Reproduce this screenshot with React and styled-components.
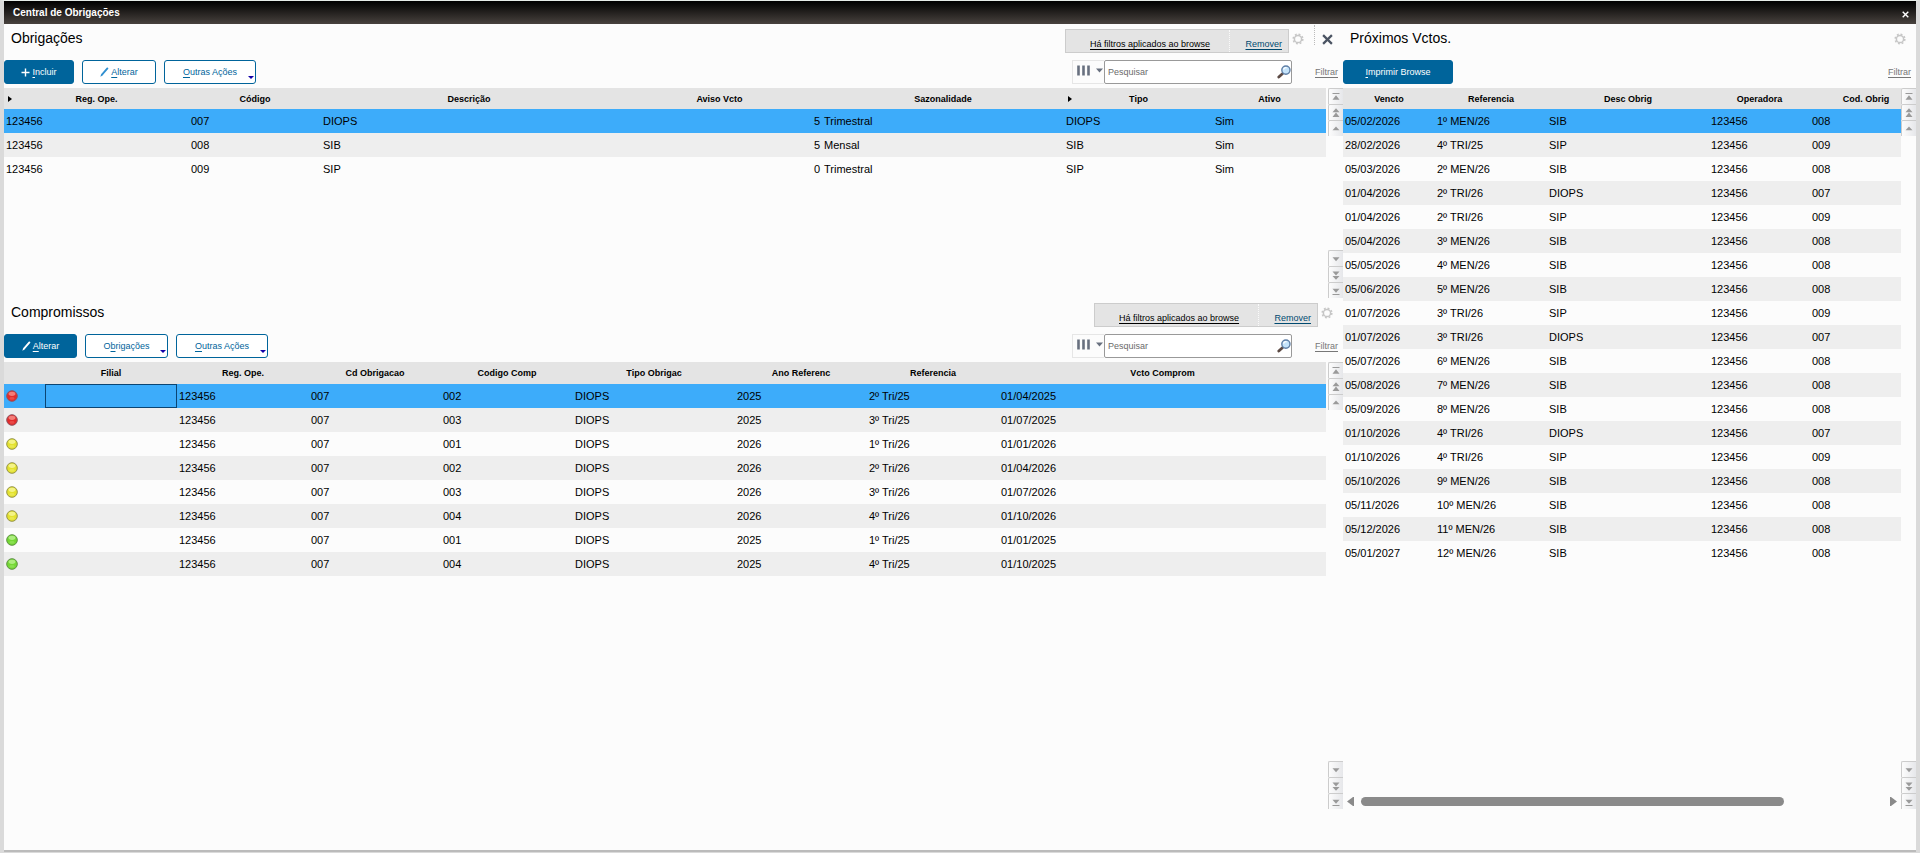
import React, { useState } from "react";
import styled, { createGlobalStyle, css } from "styled-components";

const obrigacoesCols = [
  { label: "Reg. Ope.", width: 185, marker: true },
  { label: "Código", width: 132 },
  { label: "Descrição", width: 296 },
  { label: "Aviso Vcto", width: 205, align: "right" },
  { label: "Sazonalidade", width: 242 },
  { label: "Tipo", width: 149, marker: true },
  { label: "Ativo", width: 113 },
];

const obrigacoes = [
  ["123456", "007", "DIOPS", "5", "Trimestral", "DIOPS", "Sim"],
  ["123456", "008", "SIB", "5", "Mensal", "SIB", "Sim"],
  ["123456", "009", "SIP", "0", "Trimestral", "SIP", "Sim"],
];

const compromissosCols = [
  { label: "", width: 41 },
  { label: "Filial", width: 132 },
  { label: "Reg. Ope.", width: 132 },
  { label: "Cd Obrigacao", width: 132 },
  { label: "Codigo Comp", width: 132 },
  { label: "Tipo Obrigac", width: 162 },
  { label: "Ano Referenc", width: 132 },
  { label: "Referencia", width: 132 },
  { label: "Vcto Comprom", width: 327 },
];

const compromissos = [
  ["red", "", "123456", "007", "002", "DIOPS", "2025", "2º Tri/25", "01/04/2025"],
  ["red", "", "123456", "007", "003", "DIOPS", "2025", "3º Tri/25", "01/07/2025"],
  ["yellow", "", "123456", "007", "001", "DIOPS", "2026", "1º Tri/26", "01/01/2026"],
  ["yellow", "", "123456", "007", "002", "DIOPS", "2026", "2º Tri/26", "01/04/2026"],
  ["yellow", "", "123456", "007", "003", "DIOPS", "2026", "3º Tri/26", "01/07/2026"],
  ["yellow", "", "123456", "007", "004", "DIOPS", "2026", "4º Tri/26", "01/10/2026"],
  ["green", "", "123456", "007", "001", "DIOPS", "2025", "1º Tri/25", "01/01/2025"],
  ["green", "", "123456", "007", "004", "DIOPS", "2025", "4º Tri/25", "01/10/2025"],
];

const vctosCols = [
  { label: "Vencto", width: 92 },
  { label: "Referencia", width: 112 },
  { label: "Desc Obrig", width: 162 },
  { label: "Operadora", width: 101 },
  { label: "Cod. Obrig", width: 112 },
];

const vctos = [
  ["05/02/2026", "1º MEN/26", "SIB", "123456", "008"],
  ["28/02/2026", "4º TRI/25", "SIP", "123456", "009"],
  ["05/03/2026", "2º MEN/26", "SIB", "123456", "008"],
  ["01/04/2026", "2º TRI/26", "DIOPS", "123456", "007"],
  ["01/04/2026", "2º TRI/26", "SIP", "123456", "009"],
  ["05/04/2026", "3º MEN/26", "SIB", "123456", "008"],
  ["05/05/2026", "4º MEN/26", "SIB", "123456", "008"],
  ["05/06/2026", "5º MEN/26", "SIB", "123456", "008"],
  ["01/07/2026", "3º TRI/26", "SIP", "123456", "009"],
  ["01/07/2026", "3º TRI/26", "DIOPS", "123456", "007"],
  ["05/07/2026", "6º MEN/26", "SIB", "123456", "008"],
  ["05/08/2026", "7º MEN/26", "SIB", "123456", "008"],
  ["05/09/2026", "8º MEN/26", "SIB", "123456", "008"],
  ["01/10/2026", "4º TRI/26", "DIOPS", "123456", "007"],
  ["01/10/2026", "4º TRI/26", "SIP", "123456", "009"],
  ["05/10/2026", "9º MEN/26", "SIB", "123456", "008"],
  ["05/11/2026", "10º MEN/26", "SIB", "123456", "008"],
  ["05/12/2026", "11º MEN/26", "SIB", "123456", "008"],
  ["05/01/2027", "12º MEN/26", "SIB", "123456", "008"],
];

/* Icons */
const PlusIcon = () => (
  <svg width="9" height="9" viewBox="0 0 9 9" aria-hidden="true">
    <path d="M4.5 0.5v8M0.5 4.5h8" stroke="#fff" strokeWidth="1.4" />
  </svg>
);

const PencilIcon = ({ color }) => (
  <svg width="9" height="10" viewBox="0 0 9 10" aria-hidden="true">
    <path d="M2 7.6 7.4 1.4" stroke={color} strokeWidth="1.9" strokeLinecap="round" />
    <path d="M0.4 9.8 1 7.4 2.6 8.6z" fill={color} />
  </svg>
);

const GearIcon = () => (
  <svg width="12" height="12" viewBox="0 0 12 12" aria-hidden="true">
    <circle cx="6" cy="6" r="4.8" fill="none" stroke="#c6c6c6" strokeWidth="1.6" strokeDasharray="1.9 1.87" />
    <circle cx="6" cy="6" r="3.6" fill="none" stroke="#c6c6c6" strokeWidth="1.5" />
  </svg>
);

const CrossIcon = ({ size, color }) => (
  <svg width={size} height={size} viewBox="0 0 10 10" aria-hidden="true">
    <path d="M1 1 9 9M9 1 1 9" stroke={color} strokeWidth="2" />
  </svg>
);

const ColumnsIcon = () => (
  <svg width="26" height="12" viewBox="0 0 26 12" aria-hidden="true">
    <path d="M1.5 0.5v10M6.5 0.5v10M11.5 0.5v10" stroke="#68707f" strokeWidth="2.6" />
    <path d="M19 3.5h7l-3.5 4z" fill="#68707f" />
  </svg>
);

const SearchIcon = () => (
  <svg width="14" height="14" viewBox="0 0 14 14" aria-hidden="true">
    <path d="M1.8 12 5.4 8.8" stroke="#5c4a44" strokeWidth="2.8" strokeLinecap="round" />
    <circle cx="8.9" cy="5.1" r="4.1" fill="#c5e4fb" stroke="#5f7fa6" strokeWidth="1.4" />
    <path d="M6.6 4.6a2.4 2.4 0 0 1 3-1.8" fill="none" stroke="#fff" strokeWidth="1.2" />
  </svg>
);

const scrollPaths = {
  first: "M4 2.5h8v1H4zM8 5l4 5H4z",
  pageUp: "M8 1.5 12 6H4zM8 6.5l4 5H4z",
  up: "M8 4l4 4.5H4z",
  down: "M8 9.5 4 5h8z",
  pageDown: "M8 7.5 4 3h8zM8 12.5 4 8h8z",
  last: "M8 9 4 4.5h8zM4 10.5h8v1H4z",
};

const lightColors = {
  red: ["#f7928c", "#e32b2b", "#8f5560"],
  yellow: ["#f8f89c", "#e4e22e", "#96944a"],
  green: ["#bcf292", "#74d834", "#5f9146"],
};

const StatusLight = ({ color }) => {
  const [light, base, edge] = lightColors[color];
  return (
    <svg width="12" height="12" viewBox="0 0 12 12" role="img" aria-label={color}>
      <circle cx="6" cy="6" r="5.3" fill={base} stroke={edge} strokeWidth="1" />
      <ellipse cx="6" cy="3.8" rx="3.4" ry="2.1" fill={light} opacity="0.8" />
      <ellipse cx="6" cy="8.4" rx="2.6" ry="1.4" fill={light} opacity="0.3" />
    </svg>
  );
};

const ScrollStack = ({ items }) => (
  <Stack>
    {items.map((name) => (
      <ScrollButton key={name} type="button" aria-label={name}>
        <svg width="14" height="14" viewBox="0 0 16 14" aria-hidden="true">
          <path d={scrollPaths[name]} fill="#9a9a9a" />
        </svg>
      </ScrollButton>
    ))}
  </Stack>
);

const Scroller = () => (
  <ScrollColumn>
    <ScrollStack items={["first", "pageUp", "up"]} />
    <ScrollStack items={["down", "pageDown", "last"]} />
  </ScrollColumn>
);

const FilterNotice = () => (
  <Notice>
    <NoticeText href="#filtros">Há filtros aplicados ao browse</NoticeText>
    <NoticeRemove href="#remover">Remover</NoticeRemove>
  </Notice>
);

const SearchBar = ({ id }) => {
  const [value, setValue] = useState("");

  return (
    <>
      <ColumnsButton type="button" aria-label="Colunas">
        <ColumnsIcon />
      </ColumnsButton>
      <SearchBox htmlFor={id}>
        <SearchInput
          id={id}
          type="text"
          placeholder="Pesquisar"
          aria-label="Pesquisar"
          value={value}
          onChange={(e) => setValue(e.target.value)}
        />
        <SearchIcon />
      </SearchBox>
    </>
  );
};

const Browse = ({ cols, rows, minWidth, headHeight, lights }) => {
  const [selected, setSelected] = useState(0);

  return (
    <TableArea>
      <Table $minWidth={minWidth}>
        <colgroup>
          {cols.map((col, i) => (
            <col key={i} width={col.width} />
          ))}
        </colgroup>
        <thead>
          <tr>
            {cols.map((col, i) => (
              <HeadCell key={i} $height={headHeight}>
                {col.marker && <Marker />}
                {col.label}
              </HeadCell>
            ))}
          </tr>
        </thead>
        <tbody>
          {rows.map((row, r) => (
            <Row key={r} $selected={r === selected} onClick={() => setSelected(r)}>
              {row.map((value, c) => (
                <Cell key={c} $align={cols[c].align} $focused={lights && r === selected && c === 1}>
                  {lights && c === 0 ? <StatusLight color={value} /> : value}
                </Cell>
              ))}
            </Row>
          ))}
        </tbody>
      </Table>
    </TableArea>
  );
};

const App = () => {
  return (
    <Window>
      <GlobalStyle />
      <TitleBar>
        <WindowTitle>Central de Obrigações</WindowTitle>
        <TitleClose type="button" aria-label="Fechar janela">
          <CrossIcon size={7} color="#fff" />
        </TitleClose>
      </TitleBar>

      <Main>
        <LeftColumn>
          {/* Obrigações */}
          <Panel>
            <PanelHead>
              <PanelTitle>Obrigações</PanelTitle>
              <FilterNotice />
              <IconButton type="button" aria-label="Configurar"><GearIcon /></IconButton>
              <DottedLine />
              <IconButton type="button" aria-label="Fechar"><CrossIcon size={11} color="#4b5463" /></IconButton>
            </PanelHead>
            <Toolbar>
              <Button type="button" $primary $width={70}><PlusIcon /><span><u>I</u>ncluir</span></Button>
              <Button type="button" $width={74}><PencilIcon color="#2f8fd0" /><span><u>A</u>lterar</span></Button>
              <Button type="button" $width={92} $menu><span><u>O</u>utras Ações</span></Button>
              <Spacer />
              <SearchBar id="busca-obrigacoes" />
              <FilterLink href="#filtrar">Filtrar</FilterLink>
            </Toolbar>
            <PanelBody $gap={2}>
              <Browse cols={obrigacoesCols} rows={obrigacoes} headHeight={21} />
              <Scroller />
            </PanelBody>
          </Panel>

          {/* Compromissos */}
          <Panel>
            <PanelHead>
              <PanelTitle>Compromissos</PanelTitle>
              <FilterNotice />
              <IconButton type="button" aria-label="Configurar"><GearIcon /></IconButton>
            </PanelHead>
            <Toolbar>
              <Button type="button" $primary $width={73}><PencilIcon color="#fff" /><span><u>A</u>lterar</span></Button>
              <Button type="button" $width={83} $menu><span>O<u>b</u>rigações</span></Button>
              <Button type="button" $width={92} $menu><span><u>O</u>utras Ações</span></Button>
              <Spacer />
              <SearchBar id="busca-compromissos" />
              <FilterLink href="#filtrar">Filtrar</FilterLink>
            </Toolbar>
            <PanelBody $gap={2}>
              <Browse cols={compromissosCols} rows={compromissos} headHeight={22} lights />
              <Scroller />
            </PanelBody>
          </Panel>
        </LeftColumn>

        {/* Próximos vencimentos */}
        <Panel>
          <PanelHead>
            <PanelTitle>Próximos Vctos.</PanelTitle>
            <IconButton type="button" aria-label="Configurar"><GearIcon /></IconButton>
          </PanelHead>
          <Toolbar>
            <Button type="button" $primary $width={110}><span><u>I</u>mprimir Browse</span></Button>
            <Spacer />
            <FilterLink href="#filtrar">Filtrar</FilterLink>
          </Toolbar>
          <PanelBody $gap={0}>
            <WideBrowse>
              <Browse cols={vctosCols} rows={vctos} minWidth={579} headHeight={21} />
              <HorizontalScroll>
                <ScrollArrow type="button" aria-label="Rolar para a esquerda">
                  <svg width="8" height="9" viewBox="0 0 8 9"><path d="M0 4.5 6 0h1v9H6z" fill="#8a8a8a" /></svg>
                </ScrollArrow>
                <Track><Thumb /></Track>
                <ScrollArrow type="button" aria-label="Rolar para a direita">
                  <svg width="8" height="9" viewBox="0 0 8 9"><path d="M8 4.5 2 0H1v9h1z" fill="#8a8a8a" /></svg>
                </ScrollArrow>
              </HorizontalScroll>
            </WideBrowse>
            <Scroller />
          </PanelBody>
        </Panel>
      </Main>
    </Window>
  );
};

/* Styled Components */
const GlobalStyle = createGlobalStyle`
  * {
    box-sizing: border-box;
  }

  body {
    margin: 0;
    background: #dadada;
    font-family: "Liberation Sans", Arial, sans-serif;
    font-size: 9px;
    color: #000;
  }

  button, input {
    font: inherit;
    margin: 0;
  }

  button {
    cursor: pointer;
  }

  svg {
    display: block;
    flex: none;
  }
`;

const Window = styled.div`
  display: flex;
  flex-direction: column;
  min-height: 100vh;
  border: solid #dadada;
  border-width: 1px 4px;
  border-top-color: #e6ece8;
  background: #fcfcfc;
`;

const TitleBar = styled.header`
  display: flex;
  align-items: center;
  justify-content: space-between;
  height: 23px;
  padding: 0 7px 0 9px;
  background: linear-gradient(#000, #48423e);
`;

const WindowTitle = styled.h1`
  margin: 0;
  font-size: 10px;
  font-weight: bold;
  color: #fff;
`;

const TitleClose = styled.button`
  padding: 4px 0 0;
  border: none;
  background: none;
`;

const Main = styled.main`
  flex: 1;
  display: grid;
  grid-template-columns: 1fr 573px;
  padding-bottom: 41px;
  border-bottom: 2px solid #bbb;
`;

const LeftColumn = styled.div`
  display: grid;
  grid-template-rows: 274fr 511fr;
  min-width: 0;
`;

const Panel = styled.section`
  display: flex;
  flex-direction: column;
  min-width: 0;
`;

const PanelHead = styled.div`
  display: flex;
  align-items: flex-start;
  height: 36px;
  padding: 5px 7px 0;
`;

const PanelTitle = styled.h2`
  flex: 1;
  margin: 0;
  font-size: 14px;
  font-weight: normal;
  line-height: 18px;
`;

const Notice = styled.div`
  display: flex;
  width: 224px;
  height: 24px;
  border: 1px solid #ccc;
  background: #e4e4e4;
  line-height: 28px;
`;

const NoticeText = styled.a`
  width: 164px;
  padding-left: 24px;
  border-right: 1px dotted #fafafa;
  color: #000;
  text-underline-offset: 2px;
`;

const NoticeRemove = styled.a`
  flex: 1;
  padding-right: 6px;
  text-align: right;
  color: #004a70;
  text-underline-offset: 2px;
`;

const IconButton = styled.button`
  display: flex;
  align-items: center;
  justify-content: center;
  width: 18px;
  height: 20px;
  padding: 0;
  border: none;
  background: none;
`;

const DottedLine = styled.div`
  height: 20px;
  margin: -4px 3px 0 7px;
  border-left: 1px dotted #bbb;
`;

const Toolbar = styled.div`
  display: flex;
  align-items: center;
  height: 24px;
  padding-right: 5px;
`;

const Button = styled.button`
  position: relative;
  display: flex;
  align-items: center;
  justify-content: center;
  gap: 2px;
  width: ${(props) => props.$width}px;
  height: 24px;
  margin-right: 8px;
  padding: 0;
  border: 1px solid #00649b;
  border-radius: 3px;
  background: ${(props) => (props.$primary ? "#00649b" : "#fff")};
  color: ${(props) => (props.$primary ? "#fff" : "#00649b")};

  u {
    text-underline-offset: 2px;
  }

  ${(props) =>
    props.$menu &&
    css`
      &::after {
        content: "";
        position: absolute;
        right: 1px;
        bottom: 4px;
        border: 3px solid transparent;
        border-top-color: #1200a8;
        border-bottom: none;
      }
    `}
`;

const Spacer = styled.div`
  flex: 1;
`;

const ColumnsButton = styled.button`
  display: flex;
  align-items: flex-start;
  width: 32px;
  height: 24px;
  padding: 4px 0 0 4px;
  border: 1px solid #e6e6e6;
  border-right: none;
  background: none;
`;

const SearchBox = styled.label`
  display: flex;
  align-items: center;
  width: 188px;
  height: 24px;
  padding-left: 3px;
  border: 1px solid #999;
  border-radius: 2px;
  background: #fff;
`;

const SearchInput = styled.input`
  flex: 1;
  min-width: 0;
  height: 20px;
  padding: 0;
  border: none;
  outline: none;
  background: none;

  &::placeholder {
    color: #6a6a6a;
  }
`;

const FilterLink = styled.a`
  margin-left: 23px;
  color: #777;
  text-underline-offset: 2px;
`;

const PanelBody = styled.div`
  flex: 1;
  display: flex;
  gap: ${(props) => props.$gap}px;
  min-height: 0;
  padding-top: 4px;
`;

const TableArea = styled.div`
  flex: 1;
  min-width: 0;
  overflow: hidden;
`;

const Table = styled.table`
  width: 100%;
  min-width: ${(props) => props.$minWidth || 0}px;
  table-layout: fixed;
  border-collapse: separate;
  border-spacing: 0;
`;

const HeadCell = styled.th`
  position: relative;
  height: ${(props) => props.$height}px;
  padding: 0;
  background: #e4e4e4;
  font-size: 9px;
  font-weight: bold;
  white-space: nowrap;
`;

const Marker = styled.span`
  position: absolute;
  left: 4px;
  top: 8px;
  border: 3px solid transparent;
  border-left: 4px solid #000;
  border-right: none;
`;

const Row = styled.tr`
  background: #fcfcfc;

  &:nth-child(even) {
    background: #eee;
  }

  ${(props) =>
    props.$selected &&
    css`
      && {
        background: #3dacfa;
      }
    `}
`;

const Cell = styled.td`
  height: 24px;
  padding: 0 2px;
  font-size: 11px;
  text-align: ${(props) => props.$align || "left"};
  white-space: nowrap;
  box-shadow: ${(props) => (props.$focused ? "inset 0 0 0 1px #0b4573" : "none")};
`;

const ScrollColumn = styled.div`
  display: flex;
  flex-direction: column;
  justify-content: space-between;
  width: 15px;
`;

const Stack = styled.div`
  display: flex;
  flex-direction: column;
`;

const ScrollButton = styled.button`
  width: 15px;
  height: 16px;
  padding: 0;
  border: solid #ccc;
  border-width: 1px 0 0 1px;
  border-radius: 2px 0 0 0;
  background: linear-gradient(90deg, #fcfcfc, #e6e7ea);
`;

const WideBrowse = styled.div`
  flex: 1;
  display: flex;
  flex-direction: column;
  min-width: 0;
`;

const HorizontalScroll = styled.div`
  display: flex;
  align-items: center;
  gap: 6px;
  height: 15px;
  padding: 0 4px;
`;

const ScrollArrow = styled.button`
  padding: 0;
  border: none;
  background: none;
`;

const Track = styled.div`
  flex: 1;
`;

const Thumb = styled.div`
  width: 81%;
  height: 9px;
  border-radius: 5px;
  background: #8a8a8a;
`;

export default App;
